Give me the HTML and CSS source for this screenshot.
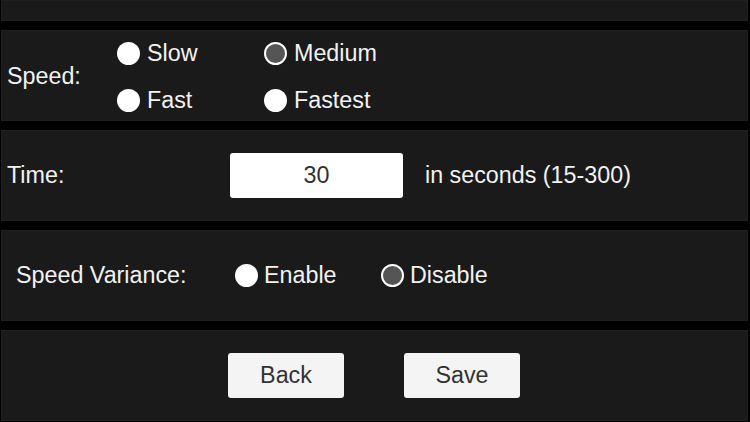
FILE: index.html
```html
<!DOCTYPE html>
<html>
<head>
<meta charset="utf-8">
<link rel="stylesheet" href="styles.css">
</head>
<body>
<div class="screen">
  <div class="panel panel-top"></div>

  <div class="panel panel-speed">
    <div class="label">Speed:</div>
    <div class="radio-grid">
      <div class="radio"><span class="dot"></span><span>Slow</span></div>
      <div class="radio"><span class="dot checked"></span><span>Medium</span></div>
      <div class="radio"><span class="dot"></span><span>Fast</span></div>
      <div class="radio"><span class="dot"></span><span>Fastest</span></div>
    </div>
  </div>

  <div class="panel panel-time">
    <div class="label time-label">Time:</div>
    <div class="input">30</div>
    <div class="hint">in seconds (15-300)</div>
  </div>

  <div class="panel panel-variance">
    <div class="label variance-label">Speed Variance:</div>
    <div class="radio enable"><span class="dot"></span><span>Enable</span></div>
    <div class="radio"><span class="dot checked"></span><span>Disable</span></div>
  </div>

  <div class="panel panel-buttons">
    <div class="button">Back</div>
    <div class="button">Save</div>
  </div>
</div>
</body>
</html>
```

FILE: styles.css
```css
html, body {
  margin: 0;
  padding: 0;
  background: #000;
}

body {
  width: 750px;
  height: 422px;
  overflow: hidden;
  font-family: "Liberation Sans", Arial, sans-serif;
  font-size: 23.3px;
  color: #f2f2f2;
}

.screen {
  display: flex;
  flex-direction: column;
  gap: 9px;
}

.panel {
  margin: 0 2px 0 1px;
  height: 91px;
  background: #1a1a1a;
  box-shadow: inset 0 0 0 1px #202020;
  display: flex;
  align-items: center;
  box-sizing: border-box;
}

.panel-top {
  height: 21px;
}

.label {
  line-height: 1;
}

.panel-speed {
  padding-left: 6px;
}

.panel-speed .label {
  width: 110px;
  margin-top: 2px;
}

.radio-grid {
  display: grid;
  grid-template-columns: 147px 147px;
  grid-template-rows: 47px 47px;
  margin-top: 3px;
}

.radio {
  display: flex;
  align-items: center;
  gap: 7px;
  line-height: 1;
}

.dot {
  width: 23px;
  height: 23px;
  border-radius: 50%;
  background: #fff;
  box-sizing: border-box;
  flex: none;
}

.dot.checked {
  background: #555;
  border: 2.5px solid #fff;
}

.panel-time {
  padding-left: 6px;
}

.time-label {
  width: 223px;
}

.input {
  width: 173px;
  height: 45px;
  background: #fff;
  border-radius: 3px;
  color: #323232;
  display: flex;
  align-items: center;
  justify-content: center;
}

.hint {
  margin-left: 22px;
}

.panel-variance {
  padding-left: 15px;
}

.variance-label {
  width: 219px;
}

.radio.enable {
  width: 146px;
}

.panel-variance .radio .dot {
  margin-right: -1px;
}

.panel-buttons {
  justify-content: center;
  gap: 60px;
  padding-right: 1px;
}

.button {
  width: 116px;
  height: 45px;
  background: #f4f4f4;
  border-radius: 3px;
  color: #323232;
  display: flex;
  align-items: center;
  justify-content: center;
}
```
